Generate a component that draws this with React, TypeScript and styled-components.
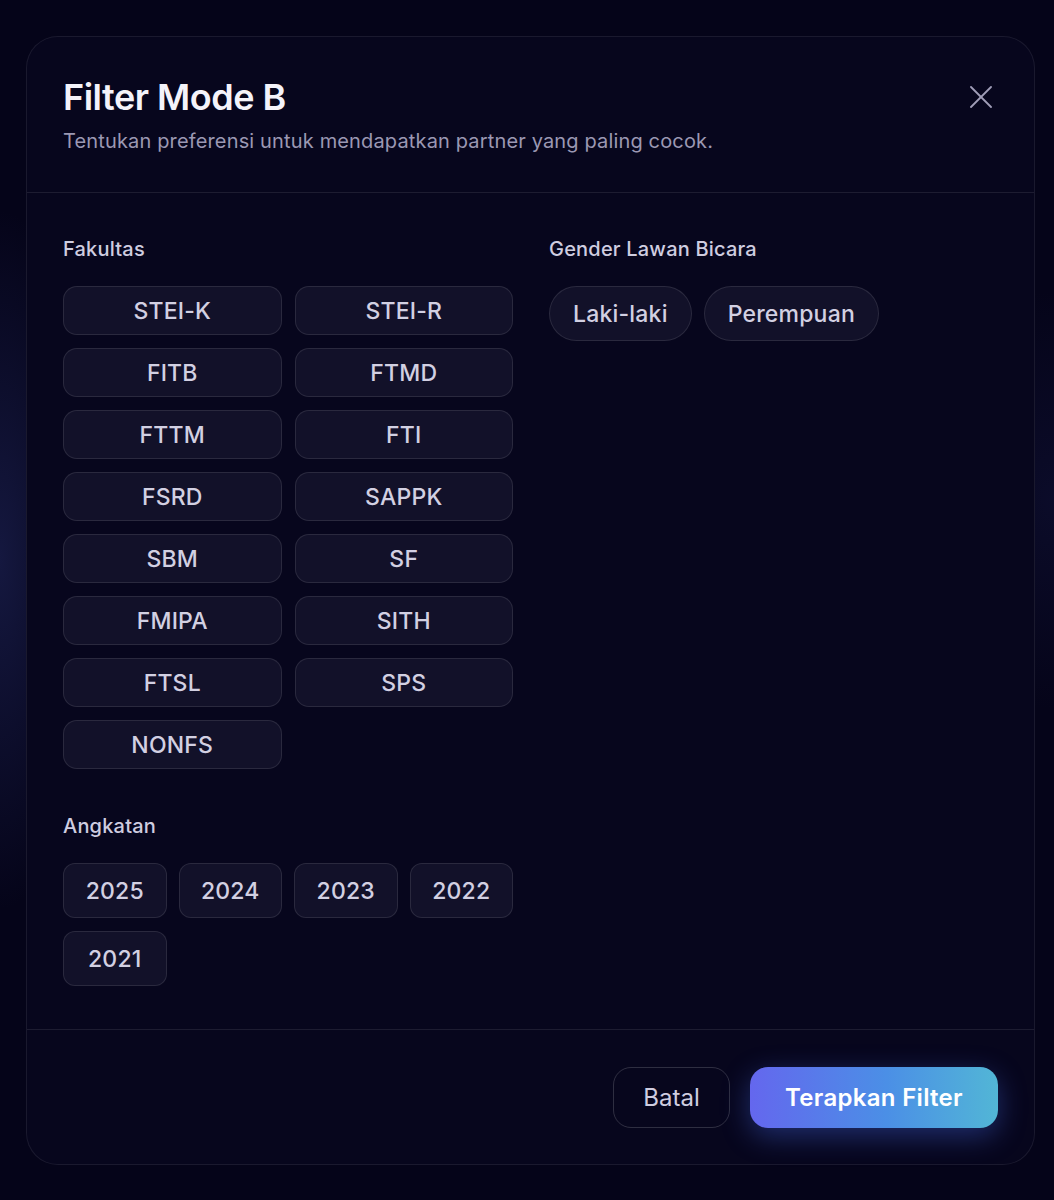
import React from "react";
import styled, { createGlobalStyle } from "styled-components";

const Global = createGlobalStyle`
  html, body { margin: 0; padding: 0; background: #050419; }
  body { font-family: Inter, "Noto Sans", sans-serif; -webkit-font-smoothing: antialiased; }
  * { box-sizing: border-box; }
`;

const Page = styled.div`
  min-height: 1200px;
  padding: 36px 19px 35px 26px;
  background:
    radial-gradient(ellipse 140px 500px at 0px 560px, rgba(40, 48, 110, 0.45), transparent 70%),
    radial-gradient(ellipse 200px 300px at 1054px 500px, rgba(30, 34, 90, 0.25), transparent 70%),
    #050419;
`;

const Modal = styled.div`
  width: 1009px;
  height: 1129px;
  border-radius: 32px;
  border: 1px solid rgba(255, 255, 255, 0.08);
  background: #07061d;
  display: flex;
  flex-direction: column;
  position: relative;
`;

const Header = styled.header`
  padding: 38px 36px 37px;
  border-bottom: 1px solid rgba(255, 255, 255, 0.09);
`;

const Title = styled.h1`
  margin: 0;
  font-size: 36px;
  line-height: 44px;
  font-weight: 600;
  color: #f4f3fa;
  letter-spacing: -0.5px;
`;

const Subtitle = styled.p`
  margin: 8px 0 0;
  font-size: 20px;
  line-height: 28px;
  color: #9b98b3;
  font-weight: 400;
  letter-spacing: 0.15px;
`;

const CloseButton = styled.button`
  position: absolute;
  top: 42px;
  right: 35px;
  width: 36px;
  height: 36px;
  padding: 0;
  border: none;
  background: transparent;
  display: flex;
  align-items: center;
  justify-content: center;
  cursor: pointer;
`;

const Body = styled.div`
  flex: 1;
  padding: 42px 36px 0;
  display: grid;
  grid-template-columns: 450px 1fr;
  column-gap: 36px;
  align-content: start;
  border-bottom: 1px solid rgba(255, 255, 255, 0.09);
`;

const Column = styled.div`
  display: flex;
  flex-direction: column;
`;

const Section = styled.section<{ $gapTop?: number }>`
  margin-top: ${(p) => p.$gapTop ?? 0}px;
`;

const Label = styled.div`
  font-size: 20px;
  line-height: 28px;
  color: #cfcde0;
  font-weight: 500;
  letter-spacing: 0.2px;
  margin-bottom: 23px;
`;

const Grid = styled.div<{ $cols: number; $colW: number; $rowGap: number; $colGap: number }>`
  display: grid;
  grid-template-columns: repeat(${(p) => p.$cols}, ${(p) => p.$colW}px);
  column-gap: ${(p) => p.$colGap}px;
  row-gap: ${(p) => p.$rowGap}px;
`;

const Chip = styled.button<{ $h: number; $r: number; $px?: number }>`
  height: ${(p) => p.$h}px;
  border-radius: ${(p) => p.$r}px;
  border: 1px solid rgba(255, 255, 255, 0.1);
  background: #121129;
  color: #d2d0e2;
  font-family: inherit;
  font-size: 23px;
  font-weight: 500;
  letter-spacing: 0.2px;
  display: flex;
  align-items: center;
  justify-content: center;
  padding: 0 ${(p) => p.$px ?? 24}px;
  cursor: pointer;
`;

const PillRow = styled.div`
  display: flex;
  gap: 12px;
`;

const Footer = styled.footer`
  padding: 37px 36px 36px;
  display: flex;
  justify-content: flex-end;
  gap: 20px;
`;

const SecondaryButton = styled.button`
  height: 61px;
  width: 117px;
  border-radius: 18px;
  border: 1px solid rgba(255, 255, 255, 0.16);
  background: transparent;
  color: #cfcde0;
  font-family: inherit;
  font-size: 24px;
  font-weight: 400;
  cursor: pointer;
`;

const PrimaryButton = styled.button`
  height: 61px;
  width: 248px;
  border-radius: 18px;
  border: none;
  background: linear-gradient(90deg, #6467ee 0%, #4b8fe6 55%, #52b6d6 100%);
  color: #ffffff;
  font-family: inherit;
  font-size: 24px;
  font-weight: 600;
  letter-spacing: 0.3px;
  box-shadow: 0 8px 28px rgba(70, 110, 240, 0.38);
  cursor: pointer;
`;

const faculties = [
  "STEI-K", "STEI-R", "FITB", "FTMD", "FTTM", "FTI", "FSRD", "SAPPK",
  "SBM", "SF", "FMIPA", "SITH", "FTSL", "SPS", "NONFS",
];
const years = ["2025", "2024", "2023", "2022", "2021"];
const genders = ["Laki-laki", "Perempuan"];

export default function App() {
  return (
    <>
      <Global />
      <Page>
        <Modal>
          <Header>
            <Title>Filter Mode B</Title>
            <Subtitle>Tentukan preferensi untuk mendapatkan partner yang paling cocok.</Subtitle>
          </Header>
          <CloseButton aria-label="Tutup">
            <svg width="22" height="22" viewBox="0 0 22 22" fill="none" stroke="#a19eb9" strokeWidth="1.8" strokeLinecap="round">
              <path d="M1 1 L21 21" />
              <path d="M21 1 L1 21" />
            </svg>
          </CloseButton>
          <Body>
            <Column>
              <Section>
                <Label>Fakultas</Label>
                <Grid $cols={2} $colW={218.5} $rowGap={13} $colGap={13}>
                  {faculties.map((f) => (
                    <Chip key={f} $h={49} $r={14}>{f}</Chip>
                  ))}
                </Grid>
              </Section>
              <Section $gapTop={43}>
                <Label>Angkatan</Label>
                <Grid $cols={4} $colW={103.5} $rowGap={13} $colGap={12}>
                  {years.map((y) => (
                    <Chip key={y} $h={55} $r={12}>{y}</Chip>
                  ))}
                </Grid>
              </Section>
            </Column>
            <Column>
              <Section>
                <Label>Gender Lawan Bicara</Label>
                <PillRow>
                  {genders.map((g) => (
                    <Chip key={g} $h={55} $r={28} $px={23}>{g}</Chip>
                  ))}
                </PillRow>
              </Section>
            </Column>
          </Body>
          <Footer>
            <SecondaryButton>Batal</SecondaryButton>
            <PrimaryButton>Terapkan Filter</PrimaryButton>
          </Footer>
        </Modal>
      </Page>
    </>
  );
}
